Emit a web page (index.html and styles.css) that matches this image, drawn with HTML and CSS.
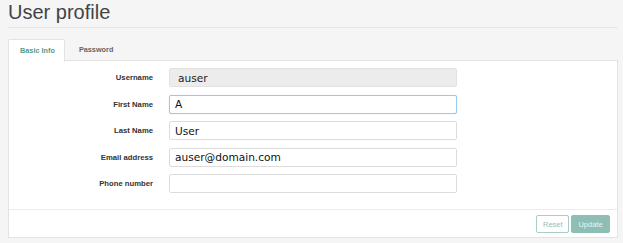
FILE: index.html
```html
<!DOCTYPE html>
<html>
<head>
<meta charset="utf-8">
<link rel="stylesheet" href="styles.css">
</head>
<body>
<div class="page">
  <h1 class="title">User profile</h1>
  <div class="tabs">
    <div class="tab active">Basic Info</div>
    <div class="tab">Password</div>
  </div>
  <div class="panel">
    <form class="form">
      <div class="row">
        <label class="label">Username</label>
        <input class="input disabled" value="auser" disabled>
      </div>
      <div class="row">
        <label class="label">First Name</label>
        <input class="input focus" value="A">
      </div>
      <div class="row">
        <label class="label">Last Name</label>
        <input class="input" value="User">
      </div>
      <div class="row">
        <label class="label">Email address</label>
        <input class="input" value="auser@domain.com">
      </div>
      <div class="row">
        <label class="label">Phone number</label>
        <input class="input" value="">
      </div>
    </form>
    <div class="footer">
      <button class="btn reset">Reset</button>
      <button class="btn update">Update</button>
    </div>
  </div>
</div>
</body>
</html>
```
FILE: styles.css
```css
html, body {
  margin: 0;
  padding: 0;
  background: #f5f5f5;
}
body {
  font-family: "Liberation Sans", Arial, sans-serif;
  color: #333;
}
.page {
  width: 610px;
  padding: 0 5px 0 8px;
}
.title {
  margin: 0;
  padding-top: 1px;
  height: 26px;
  font-size: 20px;
  line-height: 22px;
  font-weight: 300;
  color: #444;
  border-bottom: 1px solid #e6e6e6;
}
.tabs {
  display: flex;
  margin-top: 10px;
  height: 22px;
}
.tab {
  padding: 0 9px 0 11px;
  font-size: 7.3px;
  font-weight: bold;
  line-height: 22px;
  color: #666;
  border: 1px solid transparent;
  border-bottom: none;
}
.tab.active {
  background: #fff;
  color: #559c8d;
  border-color: #e3e3e3;
  border-radius: 2px 2px 0 0;
  position: relative;
  top: 1px;
  height: 22px;
}
.tab + .tab {
  padding-left: 13px;
}
.panel {
  background: #fff;
  border: 1px solid #e3e3e3;
  height: 176px;
  display: flex;
  flex-direction: column;
}
.form {
  display: flex;
  flex-direction: column;
  gap: 7.5px;
  padding: 7px 0 0 0;
  height: 140px;
  box-sizing: border-box;
}
.row {
  display: flex;
  align-items: center;
  height: 19px;
}
.label {
  width: 144px;
  text-align: right;
  font-size: 7.7px;
  font-weight: bold;
  color: #333;
  padding-right: 16px;
}
.input {
  width: 288px;
  height: 19px;
  box-sizing: border-box;
  border: 1px solid #dcdcdc;
  border-radius: 2px;
  padding: 0 5px;
  font-family: "DejaVu Sans", Verdana, sans-serif;
  font-size: 10.6px;
  color: #111;
  background: #fff;
  outline: none;
}
.input.disabled {
  background: #ececec;
  border-color: #e2e2e2;
  padding-left: 8px;
  color: #222;
}
.input.focus {
  border-color: #9cc8ef;
  box-shadow: 0 0 1px #b9dbf6;
}
.footer {
  margin-top: 8px;
  border-top: 1px solid #ececec;
  flex: 1;
  display: flex;
  justify-content: flex-end;
  align-items: flex-start;
  padding: 5px 7px 0 0;
  gap: 2px;
}
.btn {
  height: 18px;
  font-family: "Liberation Sans", Arial, sans-serif;
  font-size: 7.5px;
  border-radius: 2px;
  padding: 0 6px;
  cursor: default;
}
.reset {
  background: #fff;
  border: 1px solid #a8cfc7;
  color: #9cbcb5;
  width: 33px;
}
.update {
  background: #8fbeb4;
  border: 1px solid #8fbeb4;
  color: #e8f3f0;
  width: 39px;
}
```
